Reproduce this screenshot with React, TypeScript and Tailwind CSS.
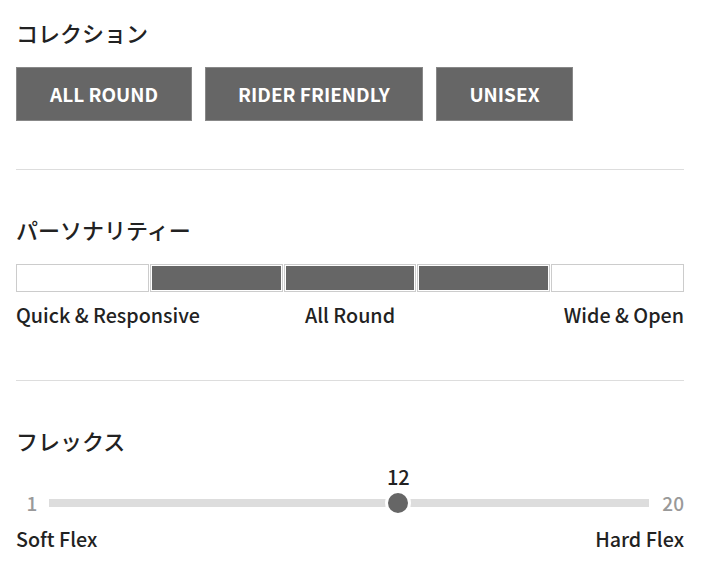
const font = { fontFamily: '"Noto Sans CJK JP", "Noto Sans", sans-serif' };

const collections = [
  { label: "ALL ROUND", width: "w-[176px]" },
  { label: "RIDER FRIENDLY", width: "w-[218px]" },
  { label: "UNISEX", width: "w-[137px]" },
];
const personality = [false, true, true, true, false];

const Heading = ({ children }: { children: React.ReactNode }) => (
  <h2 className="text-[22px] leading-[30px] font-medium text-[#222]">{children}</h2>
);

export default function App() {
  const min = 1;
  const max = 20;
  const value = 12;
  const pct = ((value - min) / (max - min)) * 100;

  return (
    <div className="w-[710px] h-[580px] bg-white pl-4 pt-[17px] text-[#222]" style={font}>
      <div className="w-[668px]">
        <section className="pb-12 border-b border-[#ddd]">
          <Heading>コレクション</Heading>
          <div className="flex gap-[13px] mt-[20px]">
            {collections.map((c) => (
              <div
                key={c.label}
                className={`${c.width} h-[54px] flex items-center justify-center bg-[#666] border border-[#888] text-white text-[19px] font-bold`}
              >
                {c.label}
              </div>
            ))}
          </div>
        </section>

        <section className="pt-[44px] pb-[50px] border-b border-[#ddd]">
          <Heading>パーソナリティー</Heading>
          <div className="flex gap-[1px] mt-[20px] h-[28px]">
            {personality.map((on, i) => (
              <div key={i} className="flex-1 border border-[#ccc] p-[1px]">
                {on && <div className="w-full h-full bg-[#666]" />}
              </div>
            ))}
          </div>
          <div className="grid grid-cols-3 mt-[8px] text-[19.7px] leading-[30px] font-medium">
            <span>Quick &amp; Responsive</span>
            <span className="text-center">All Round</span>
            <span className="text-right">Wide &amp; Open</span>
          </div>
        </section>

        <section className="pt-[44px]">
          <Heading>フレックス</Heading>
          <div className="flex items-center mt-[38px] h-[20px]">
            <span className="w-[32px] text-center text-[19px] text-[#999] font-medium">{min}</span>
            <div className="relative flex-1 h-[8px] bg-[#ddd] mx-[1px]">
              <div
                className="absolute top-1/2 -translate-x-1/2 -translate-y-1/2 w-[26px] h-[26px] rounded-full bg-[#666] border-[3px] border-white"
                style={{ left: `calc(${pct}% + 2px)` }}
              >
                <span className="absolute bottom-[24px] left-1/2 -translate-x-1/2 text-[20px] leading-[24px] font-medium text-[#222]">
                  {value}
                </span>
              </div>
            </div>
            <span className="w-[34px] text-right text-[19px] text-[#999] font-medium">{max}</span>
          </div>
          <div className="flex justify-between mt-[11px] text-[19.7px] leading-[30px] font-medium">
            <span>Soft Flex</span>
            <span>Hard Flex</span>
          </div>
        </section>
      </div>
    </div>
  );
}
